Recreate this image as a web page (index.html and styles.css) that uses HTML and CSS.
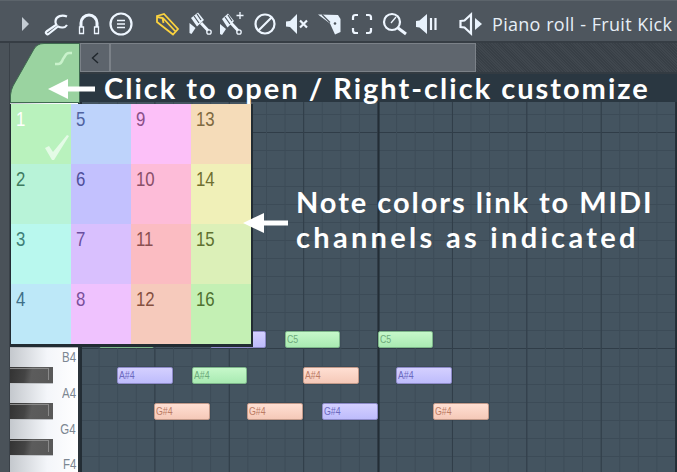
FILE: index.html
```html
<!DOCTYPE html>
<html lang="en">
<head>
  <meta charset="UTF-8">
  <title>Piano roll - Fruit Kick</title>
  <link rel="stylesheet" href="styles.css">
</head>

<body>

  <div class="toolbar">
    <svg class="menu-arrow" viewBox="0 0 7 14"><path d="M0 0L7 7L0 14Z"/></svg>

    <div class="tools tools-first">
      <svg class="tool" viewBox="0 0 24 24"><path class="line" d="M23 4.500C18 2.500 12 4 11.500 9c-.2 2 .3 3 .8 3.700L2.500 19.500c-1.500 1.200.5 3.800 2 2.500l9.500-7.500c3 1.500 7 1.500 9-1.500"/></svg>
      <svg class="tool" viewBox="0 0 24 24"><path class="line thick" d="M4 15V11a8 8 0 0 1 16 0v4"/><path class="line thin" d="M2.500 15h4v6.500h-4zM17.500 15h4v6.500h-4z"/></svg>
      <svg class="tool" viewBox="0 0 24 24"><circle class="line" cx="12" cy="12" r="10.500"/><path class="line thin" d="M8 8.500h8M8 12h8M8 15.500h8"/></svg>
    </div>

    <div class="tools tools-second">
      <svg class="tool" viewBox="0 0 24 24"><path class="line pencil" d="M2 4l7-2 14 15-5 5.500L2 10zM2.500 5l5 1 1 5M8 6l12 13"/></svg>
      <svg class="tool" viewBox="0 0 24 24"><path class="fill" d="M3 6l7-5.500L16 8l-7 6.500z"/><path class="cut" d="M6 4l5 7M9 2l4 6"/><path class="line thick" d="M13 11l7 7.500"/><circle class="line thin" cx="21" cy="20" r="2.200"/><path class="fill" d="M1.500 11l6 5-4 6-2-1z"/></svg>
      <svg class="tool" viewBox="0 0 24 24"><path class="fill" d="M2 7l6-5.500 6 7.500-6.500 6.500z"/><path class="cut" d="M5 5l5 7M8 3l4 6"/><path class="line thick" d="M11 11l7 7.500"/><circle class="line thin" cx="19" cy="20" r="2.200"/><path class="fill" d="M0 12l6 5-4 6-2-1z"/><path class="line thin" d="M20 0v7M16.500 3.500h7"/></svg>
      <svg class="tool" viewBox="0 0 24 24"><circle class="line" cx="12" cy="12" r="9.500"/><path class="line" d="M5.500 18.500L18.500 5.500"/></svg>
      <svg class="tool" viewBox="0 0 24 24"><path class="fill" d="M1 9.500l4-.5 7-7v20l-7-7-4-.5z"/><path class="line" d="M15 8.500l7 7M22 8.500l-7 7"/></svg>
      <svg class="tool" viewBox="0 0 24 24"><path class="fill" d="M0 2.500L20 3l2.500 4v13L17 22.500 12 11.500z"/><path class="cut" d="M4 2.500l8 8"/><circle class="hole" cx="17" cy="11.500" r="1.300"/></svg>
      <svg class="tool" viewBox="0 0 24 24"><path class="line" d="M3 8V5.500Q3 3 5.500 3H8M16 3h2.500Q21 3 21 5.500V8M21 16v2.500Q21 21 18.500 21H16M8 21H5.500Q3 21 3 18.500V16"/></svg>
      <svg class="tool" viewBox="0 0 24 24"><circle class="line" cx="9" cy="10" r="8"/><path class="line thin" d="M8 11l5-6"/><path class="line thick" d="M15 16l8 6"/></svg>
      <svg class="tool" viewBox="0 0 24 24"><path class="fill" d="M1 9l3.500-.5L12 2v20l-7.500-6.500L1 15z"/><path class="line" d="M16 6v12M20.500 6v12"/></svg>
    </div>

    <svg class="tool tool-speaker" viewBox="0 0 24 24"><path class="line" d="M1.500 9l4-.5L12 2.500v19l-6.500-6-4-.5z"/><path class="fill" d="M16 6l7 6-7 6z"/></svg>
    <span class="title">Piano roll - Fruit Kick</span>
  </div>

  <div class="main">
    <div class="edge"></div>

    <div class="left-col">
      <div class="tab">
        <svg class="tab-shape" viewBox="0 0 70 60"><path d="M.5 59.500V52Q1 47 3 43L24 6Q27 .5 34 .5H69.500V59.500Z"/><path class="tab-curve" d="M45 21h3c3 0 4-2 5-5l2-3c1-2 2-3 4-3h3"/></svg>
      </div>
      <div class="piano">
        <div class="white-key"><span>B4</span></div>
        <div class="black-key"></div>
        <div class="white-key"><span>A4</span></div>
        <div class="black-key"></div>
        <div class="white-key"><span>G4</span></div>
        <div class="black-key"></div>
        <div class="white-key"><span>F4</span></div>
      </div>
    </div>

    <div class="right-col">
      <div class="scroll-row">
        <div class="scroll-btn"><svg viewBox="0 0 8 12"><path d="M7 1L1.500 6L7 11"/></svg></div>
        <div class="scroll-bar"></div>
        <div class="scroll-rest"></div>
      </div>
      <div class="band"></div>
      <div class="roll">
        <div class="note green" style="grid-area: 2 / 2 / 3 / 5"></div>
        <div class="note purple" style="grid-area: 2 / 8 / 3 / 11"></div>
        <div class="note green" style="grid-area: 2 / 12 / 3 / 15"><span>C5</span></div>
        <div class="note green" style="grid-area: 2 / 17 / 3 / 20"><span>C5</span></div>
        <div class="note purple" style="grid-area: 4 / 3 / 5 / 6"><span>A#4</span></div>
        <div class="note green" style="grid-area: 4 / 7 / 5 / 10"><span>A#4</span></div>
        <div class="note salmon" style="grid-area: 4 / 13 / 5 / 16"><span>A#4</span></div>
        <div class="note purple" style="grid-area: 4 / 18 / 5 / 21"><span>A#4</span></div>
        <div class="note salmon" style="grid-area: 6 / 5 / 7 / 8"><span>G#4</span></div>
        <div class="note salmon" style="grid-area: 6 / 10 / 7 / 13"><span>G#4</span></div>
        <div class="note purple" style="grid-area: 6 / 14 / 7 / 17"><span>G#4</span></div>
        <div class="note salmon" style="grid-area: 6 / 20 / 7 / 23"><span>G#4</span></div>
      </div>
    </div>
  </div>

  <!-- the help overlay -->
  <div class="palette">
    <div class="cell c1"><span>1</span>
      <svg class="check" viewBox="0 0 26 26"><path d="M1 14l4-2 4 6L23 1l2 1L10 26H8z"/></svg>
    </div>
    <div class="cell c5"><span>5</span></div>
    <div class="cell c9"><span>9</span></div>
    <div class="cell c13"><span>13</span></div>
    <div class="cell c2"><span>2</span></div>
    <div class="cell c6"><span>6</span></div>
    <div class="cell c10"><span>10</span></div>
    <div class="cell c14"><span>14</span></div>
    <div class="cell c3"><span>3</span></div>
    <div class="cell c7"><span>7</span></div>
    <div class="cell c11"><span>11</span></div>
    <div class="cell c15"><span>15</span></div>
    <div class="cell c4"><span>4</span></div>
    <div class="cell c8"><span>8</span></div>
    <div class="cell c12"><span>12</span></div>
    <div class="cell c16"><span>16</span></div>
  </div>

  <svg class="arrow arrow-top" viewBox="0 0 47 20"><path d="M0 10L20 0V7.500H47V12.500H20V20Z"/></svg>
  <div class="callout callout-top">Click to open / Right-click customize</div>

  <svg class="arrow arrow-side" viewBox="0 0 45 20"><path d="M0 10L21 0V7.500H45V12.500H21V20Z"/></svg>
  <div class="callout callout-side">
    <div class="side-first">Note colors link to MIDI</div>
    <div class="side-second">channels as indicated</div>
  </div>

</body>

</html>
```
FILE: styles.css
```css
html,
body {
  margin: 0;
  width: 677px;
  height: 472px;
  overflow: hidden;
}

body {
  position: relative;
  background-color: #4a5259;
  font-family: "Liberation Sans", Arial, sans-serif;
}

/* toolbar */

.toolbar {
  display: flex;
  align-items: center;
  height: 41px;
  padding-left: 22px;
  background-color: #4e565e;
  border-top: 1px solid #5c646b;
  box-sizing: border-box;
  white-space: nowrap;
  overflow: hidden;
}

.menu-arrow {
  width: 7px;
  height: 14px;
  margin-top: 6px;
  flex: none;
  fill: #c4ccd4;
}

.tools {
  display: flex;
  gap: 8.5px;
  margin-top: 6px;
  flex: none;
}

.tools-first {
  margin-left: 15px;
}

.tools-second {
  margin-left: 22px;
}

.tool {
  width: 24px;
  height: 24px;
  flex: none;
  overflow: visible;
}

.tool-speaker {
  margin-left: 20px;
  margin-top: 6px;
}

.line {
  fill: none;
  stroke: #eef6ff;
  stroke-width: 2.2;
}

.line.thin {
  stroke-width: 1.3;
}

.line.thick {
  stroke-width: 3;
}

.line.pencil {
  stroke: #fbd23f;
  stroke-width: 1.8;
}

.fill {
  fill: #e8f2fc;
}

.cut {
  fill: none;
  stroke: #4e565e;
  stroke-width: 1.2;
}

.hole {
  fill: #4e565e;
}

.title {
  margin-left: 9px;
  margin-top: 5px;
  font-family: "Open Sans", sans-serif;
  font-size: 18px;
  letter-spacing: 0.3px;
  word-spacing: 0.5px;
  color: #e6eef6;
}

/* main area */

.main {
  display: flex;
  height: 431px;
  border-top: 2px solid #363d44;
  box-sizing: border-box;
}

.edge {
  width: 10px;
  flex: none;
  border-right: 1px solid #3a4148;
  box-sizing: border-box;
}

.left-col {
  width: 70px;
  flex: none;
  display: flex;
  flex-direction: column;
}

.tab {
  height: 60px;
  flex: none;
}

.tab-shape {
  display: block;
  width: 70px;
  height: 60px;
}

.tab-shape path {
  fill: #9ad3a0;
  stroke: #3f6a50;
}

.tab-shape .tab-curve {
  fill: none;
  stroke: #c9f2cb;
  stroke-width: 2.5;
}

.piano {
  flex: 1;
  display: flex;
  flex-direction: column;
  justify-content: flex-end;
  background: linear-gradient(to right, #c4c8cd, #f4f6fa 55%, #ffffff);
  border-right: 2px solid #2c343a;
  box-sizing: border-box;
}

.white-key {
  height: 19px;
  flex: none;
  padding-right: 2px;
  box-sizing: border-box;
  text-align: right;
  font-size: 14px;
  line-height: 19px;
  color: #7c8792;
}

.white-key span {
  display: inline-block;
  transform: scaleX(0.82);
  transform-origin: right center;
}

.white-key:first-child {
  height: 21px;
  border-top: 2px solid #b4b8bd;
}

.white-key:last-child {
  height: 16px;
  line-height: 16px;
}

.black-key {
  width: 43px;
  height: 17px;
  flex: none;
  background:
    linear-gradient(#8a8a8a, #8a8a8a) 38px 1px / 1px 12px no-repeat,
    linear-gradient(#8a8a8a, #8a8a8a) 0 1px / 39px 1px no-repeat,
    linear-gradient(100deg, #333 0%, #444 35%, #5c5c5c 50%, #585858 100%);
  border-bottom: 1px solid #bfc2c6;
  box-sizing: border-box;
}

.right-col {
  flex: 1;
  display: flex;
  flex-direction: column;
  min-width: 0;
}

.scroll-row {
  display: flex;
  height: 29px;
  flex: none;
}

.scroll-btn {
  width: 30px;
  flex: none;
  display: flex;
  align-items: center;
  justify-content: center;
  background-color: #5d646c;
  border: 1px solid #7b8188;
  box-sizing: border-box;
}

.scroll-btn svg {
  width: 8px;
  height: 12px;
  fill: none;
  stroke: #1f262c;
  stroke-width: 1.4;
}

.scroll-bar {
  width: 366px;
  flex: none;
  background-color: #5f666e;
  border: 1px solid #7b8188;
  box-sizing: border-box;
}

.scroll-rest {
  flex: 1;
  background-color: #40474e;
  background-image: repeating-linear-gradient(45deg, #383f46 0 1px, transparent 1px 2px);
}

.band {
  height: 30px;
  flex: none;
  background-color: #2a3741;
  border-top: 2px solid #333b42;
  box-sizing: border-box;
}

.roll {
  flex: 1;
  display: grid;
  grid-template-columns: repeat(32, 18.6px);
  grid-template-rows: 229px repeat(5, 18px);
  background-color: #445460;
  background-image:
    linear-gradient(to right, #232d35 2px, transparent 2px),
    linear-gradient(to right, #303d48 1px, transparent 1px),
    linear-gradient(to right, #3c4b57 1px, transparent 1px),
    linear-gradient(to bottom, #303d48 1px, transparent 1px),
    linear-gradient(to bottom, #3c4b57 1px, transparent 1px);
  background-size: 297.6px 100%, 74.4px 100%, 18.6px 100%, 100% 216px, 100% 18px;
  background-position: 0 0, 0 0, 0 0, 0 30px, 0 12px;
}

.note {
  height: 17px;
  padding-left: 1px;
  box-sizing: border-box;
  border-radius: 2px;
  font-size: 11px;
  line-height: 15px;
  overflow: hidden;
}

.note span {
  display: inline-block;
  transform: scaleX(0.8);
  transform-origin: left center;
}

.note.green {
  background: linear-gradient(#c6f8ca, #a9eab2);
  border: 1px solid #7db68a;
  color: #6dab7b;
}

.note.purple {
  background: linear-gradient(#d4d0ff, #bebcfc);
  border: 1px solid #8e8bc9;
  color: #6b69bf;
}

.note.salmon {
  background: linear-gradient(#ffdfd3, #f5c9b8);
  border: 1px solid #c39a8a;
  color: #bc7c65;
}

/* help overlay */

.palette {
  position: absolute;
  left: 10px;
  top: 104px;
  display: grid;
  grid-template-columns: repeat(4, 60px);
  grid-auto-rows: 60px;
  border-left: 1px solid #222c33;
  border-right: 2px solid #222c33;
  border-bottom: 3px solid #222c33;
}

.cell {
  position: relative;
  padding: 3px 0 0 5px;
  box-sizing: border-box;
  font-size: 21px;
  line-height: 24px;
}

.cell span {
  display: inline-block;
  transform: scaleX(0.8);
  transform-origin: left center;
}

.check {
  position: absolute;
  left: 33px;
  top: 30px;
  width: 26px;
  height: 26px;
  fill: #e4fbe6;
}

.c1 { background-color: #b9f2bd; color: #ffffff; }
.c2 { background-color: #b8f3d8; color: #3f7a60; }
.c3 { background-color: #b9f8ee; color: #3f7f78; }
.c4 { background-color: #bde8f8; color: #3f6f88; }
.c5 { background-color: #bed3fb; color: #4f62a0; }
.c6 { background-color: #c3c1fe; color: #4f4f9a; }
.c7 { background-color: #d9c0fe; color: #6a4fa0; }
.c8 { background-color: #efc2fe; color: #7a4f9a; }
.c9 { background-color: #fcc0f8; color: #8a4f88; }
.c10 { background-color: #fdbcd8; color: #8a4f68; }
.c11 { background-color: #fbbcc2; color: #8a4f50; }
.c12 { background-color: #f6cabc; color: #85503f; }
.c13 { background-color: #f5dcb9; color: #7f6a40; }
.c14 { background-color: #f0f0b8; color: #6f6f30; }
.c15 { background-color: #dcf0b8; color: #5f7030; }
.c16 { background-color: #c4f0b4; color: #4f7030; }

.arrow {
  position: absolute;
  fill: #ffffff;
}

.arrow-top {
  left: 48px;
  top: 79px;
  width: 47px;
  height: 20px;
}

.arrow-side {
  left: 243px;
  top: 213px;
  width: 45px;
  height: 20px;
}

.callout {
  position: absolute;
  font-family: Lato, sans-serif;
  font-weight: 700;
  font-size: 29px;
  color: #ffffff;
  white-space: nowrap;
}

.callout-top {
  left: 104px;
  top: 70px;
  letter-spacing: 2px;
  line-height: 36px;
}

.callout-side {
  left: 296px;
  top: 184px;
  line-height: 35px;
}

.side-first {
  letter-spacing: 1.95px;
}

.side-second {
  letter-spacing: 3.3px;
}
```
